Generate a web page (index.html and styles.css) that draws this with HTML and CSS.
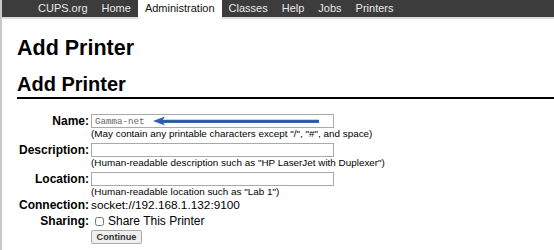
FILE: index.html
```html
<!DOCTYPE html>
<html lang="en">

<head>
    <meta charset="UTF-8">
    <title>Add Printer - CUPS</title>
    <link rel="stylesheet" href="styles.css">
</head>

<body>
    <div class="frame">
        <nav class="header">
            <ul>
                <li><a href="#">CUPS.org</a></li>
                <li><a href="#">Home</a></li>
                <li class="active"><a href="#">Administration</a></li>
                <li><a href="#">Classes</a></li>
                <li><a href="#">Help</a></li>
                <li><a href="#">Jobs</a></li>
                <li><a href="#">Printers</a></li>
            </ul>
        </nav>

        <div class="content">
            <h1 class="title">Add Printer</h1>
            <h2 class="title">Add Printer</h2>

            <form class="add-form">
                <table class="edit">
                    <tr class="field-row">
                        <th>Name:</th>
                        <td>
                            <div class="field">
                                <input type="text" class="text" value="Gamma-net">
                                <svg class="arrow" width="167" height="10" viewBox="0 0 167 10">
                                    <path d="M8 5 H166" stroke="#2a5fb0" stroke-width="2.6" />
                                    <path d="M8 6.3 H166" stroke="#1d4690" stroke-width="1" />
                                    <path d="M0 5 L12 0.5 L9 5 L12 9.5 Z" fill="#2a5fb0" />
                                </svg>
                            </div>
                            <div class="hint">(May contain any printable characters except "/", "#", and space)</div>
                        </td>
                    </tr>
                    <tr class="field-row">
                        <th>Description:</th>
                        <td>
                            <input type="text" class="text">
                            <div class="hint">(Human-readable description such as "HP LaserJet with Duplexer")</div>
                        </td>
                    </tr>
                    <tr class="field-row last">
                        <th>Location:</th>
                        <td>
                            <input type="text" class="text">
                            <div class="hint">(Human-readable location such as "Lab 1")</div>
                        </td>
                    </tr>
                    <tr class="text-row">
                        <th>Connection:</th>
                        <td>socket://192.168.1.132:9100</td>
                    </tr>
                    <tr class="text-row">
                        <th>Sharing:</th>
                        <td>
                            <label class="check"><input type="checkbox"> Share This Printer</label>
                        </td>
                    </tr>
                    <tr>
                        <th></th>
                        <td><button type="button" class="btn">Continue</button></td>
                    </tr>
                </table>
            </form>
        </div>
    </div>
</body>

</html>
```

FILE: styles.css
```css
/* Page */
body {
    margin: 0;
    background: #fff;
    font-family: "Liberation Sans", Arial, sans-serif;
    color: #000;
}

.frame {
    border-left: 2px solid #c8c8c8;
    height: 250px;
    overflow: hidden;
    box-sizing: border-box;
}

/* Top navigation */
.header {
    background: #3c3c3c;
    border-bottom: 2px solid #dcdcdc;
    box-shadow: -2px 0 0 #d0551f;
}

.header ul {
    list-style: none;
    margin: 0;
    padding: 0 0 0 29px;
    display: flex;
    height: 17px;
}

.header li a {
    display: block;
    padding: 1px 7px 0 7px;
    height: 16px;
    line-height: 15px;
    font-size: 11px;
    color: #e8e8e8;
    text-decoration: none;
}

.header li.active a {
    background: #fff;
    color: #111;
    height: 18px;
}

/* Titles */
.content {
    padding: 0 0 0 15px;
}

h1.title {
    font-size: 21.5px;
    margin: 17px 0 0 0;
    line-height: 24px;
}

h2.title {
    font-size: 20px;
    margin: 13px 0 0 0;
    padding-bottom: 2px;
    line-height: 22px;
    border-bottom: 2px solid #000;
}

/* Form table */
.add-form {
    margin-top: 15px;
}

table.edit {
    border-collapse: collapse;
}

table.edit th {
    text-align: right;
    font-size: 12px;
    vertical-align: top;
    padding: 0 2px 0 2px;
    line-height: 14px;
}

table.edit td {
    padding: 0;
    vertical-align: top;
}

table.edit .field-row td {
    padding-bottom: 4px;
}

table.edit .field-row.last td {
    padding-bottom: 1px;
}

table.edit .text-row td {
    font-size: 11.8px;
    line-height: 14px;
    padding-bottom: 2px;
}

.field {
    position: relative;
    width: 243px;
}

input.text {
    display: block;
    width: 243px;
    height: 14px;
    box-sizing: border-box;
    border: 1px solid #a9a9a9;
    padding: 0 3px;
    margin: 0;
    font-family: "Liberation Mono", monospace;
    font-size: 9.2px;
    color: #666;
}

/* arrow drawn on top of the name field */
.arrow {
    position: absolute;
    left: 62px;
    top: 2px;
}

.hint {
    font-size: 9.9px;
    line-height: 11px;
}

.check {
    display: flex;
    align-items: center;
    gap: 4px;
    font-size: 12px;
}

.check input {
    margin: 0 0 0 4px;
    width: 9px;
    height: 9px;
}

.btn {
    display: block;
    margin: 0;
    height: 14px;
    font-family: "Liberation Sans", Arial, sans-serif;
    font-size: 9.2px;
    font-weight: bold;
    line-height: 10px;
    padding: 1px 4px;
    width: 51px;
    background: #efefef;
    border: 1px solid #aaa;
    border-radius: 2px;
    color: #333;
}
```
